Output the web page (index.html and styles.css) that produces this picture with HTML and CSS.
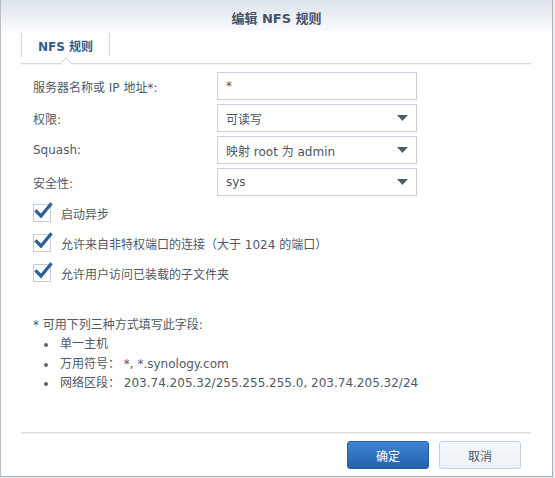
FILE: index.html
```html
<!DOCTYPE html>
<html lang="zh-CN">
<head>
<meta charset="utf-8">
<title>编辑 NFS 规则</title>
<link rel="stylesheet" href="styles.css">
</head>
<body>
<div class="dialog">
  <div class="header"><span class="title">编辑 NFS 规则</span></div>
  <div class="content">
    <div class="tabs">
      <div class="tab">NFS 规则</div>
    </div>
    <div class="form">
      <div class="row">
        <span class="label">服务器名称或 IP 地址*:</span>
        <div class="field"><span class="value">*</span></div>
      </div>
      <div class="row">
        <span class="label">权限:</span>
        <div class="field"><span class="value">可读写</span><svg class="arrow" width="11" height="6" viewBox="0 0 11 6"><path d="M0 0H11L5.5 6Z" fill="#535d68"/></svg></div>
      </div>
      <div class="row">
        <span class="label">Squash:</span>
        <div class="field"><span class="value">映射 root 为 admin</span><svg class="arrow" width="11" height="6" viewBox="0 0 11 6"><path d="M0 0H11L5.5 6Z" fill="#535d68"/></svg></div>
      </div>
      <div class="row">
        <span class="label">安全性:</span>
        <div class="field"><span class="value">sys</span><svg class="arrow" width="11" height="6" viewBox="0 0 11 6"><path d="M0 0H11L5.5 6Z" fill="#535d68"/></svg></div>
      </div>
    </div>
    <div class="checks">
      <div class="check">
        <span class="box"><svg width="20" height="18" viewBox="0 0 20 18"><path d="M3.5 9.5L8 14L17.5 2.5" fill="none" stroke="#2f5f99" stroke-width="3.2" stroke-linecap="square"/></svg></span>
        <span class="check-text">启动异步</span>
      </div>
      <div class="check">
        <span class="box"><svg width="20" height="18" viewBox="0 0 20 18"><path d="M3.5 9.5L8 14L17.5 2.5" fill="none" stroke="#2f5f99" stroke-width="3.2" stroke-linecap="square"/></svg></span>
        <span class="check-text">允许来自非特权端口的连接（大于 1024 的端口）</span>
      </div>
      <div class="check">
        <span class="box"><svg width="20" height="18" viewBox="0 0 20 18"><path d="M3.5 9.5L8 14L17.5 2.5" fill="none" stroke="#2f5f99" stroke-width="3.2" stroke-linecap="square"/></svg></span>
        <span class="check-text">允许用户访问已装载的子文件夹</span>
      </div>
    </div>
    <div class="note">
      <p class="note-title">* 可用下列三种方式填写此字段:</p>
      <ul class="note-list">
        <li>单一主机</li>
        <li>万用符号： *, *.synology.com</li>
        <li>网络区段： 203.74.205.32/255.255.255.0, 203.74.205.32/24</li>
      </ul>
    </div>
  </div>
  <div class="footer">
    <div class="footer-inner">
      <button class="btn btn-primary">确定</button>
      <button class="btn btn-cancel">取消</button>
    </div>
  </div>
</div>
</body>
</html>
```

FILE: styles.css
```css
html, body {
  margin: 0;
  padding: 0;
}
body {
  width: 555px;
  height: 478px;
  background: #e9ecef;
  font-family: "DejaVu Sans", "Noto Sans CJK SC", sans-serif;
  font-size: 12px;
  color: #4f5964;
  overflow: hidden;
}
.dialog {
  box-sizing: border-box;
  width: 553px;
  height: 477px;
  background: #fff;
  border-left: 1px solid #b9bec4;
  border-right: 1px solid #a9aeb4;
  border-bottom: 1px solid #a9aeb4;
  display: flex;
  flex-direction: column;
}
.header {
  height: 33px;
  flex: none;
  background: linear-gradient(#dce3ec, #f6f8fb 85%, #fff);
  display: flex;
  align-items: center;
  justify-content: center;
}
.title {
  font-size: 13px;
  font-weight: bold;
  color: #44546a;
  margin-top: 1px;
}
.content {
  flex: 1;
  padding: 0 21px 0 20px;
  display: flex;
  flex-direction: column;
}
.tabs {
  position: relative;
  height: 30px;
  border-bottom: 1px solid #d4d7db;
  box-shadow: 0 1px 0 #eef0f2;
  display: flex;
}
.tab {
  position: relative;
  box-sizing: border-box;
  width: 89px;
  height: 24px;
  border-left: 1px solid #d3dde8;
  border-right: 1px solid #d3dde8;
  display: flex;
  align-items: center;
  justify-content: center;
  font-weight: bold;
  color: #2f5c90;
}
.tab::after {
  content: "";
  position: absolute;
  left: 40px;
  bottom: -10px;
  width: 7px;
  height: 7px;
  background: #fff;
  border-top: 1px solid #d4d7db;
  border-left: 1px solid #d4d7db;
  transform: rotate(45deg);
}
.form {
  margin-top: 8px;
  display: flex;
  flex-direction: column;
  gap: 4px;
}
.row {
  display: flex;
  align-items: center;
  height: 28px;
}
.label {
  width: 184px;
  padding-left: 12px;
  flex: none;
}
.field {
  box-sizing: border-box;
  width: 200px;
  height: 28px;
  border: 1px solid #c8d3df;
  display: flex;
  align-items: center;
  justify-content: space-between;
  padding: 0 8px 0 8px;
  color: #4a545f;
}
.arrow {
  display: block;
}
.checks {
  margin-top: 2px;
  display: flex;
  flex-direction: column;
}
.check {
  height: 30px;
  display: flex;
  align-items: center;
  padding-left: 12px;
}
.box {
  box-sizing: border-box;
  width: 18px;
  height: 18px;
  border: 1px solid #c4cdd7;
  background: #fff;
  position: relative;
  flex: none;
}
.box svg {
  position: absolute;
  left: -1px;
  top: -3px;
  overflow: visible;
}
.check-text {
  margin-left: 10px;
}
.note {
  margin-top: 27px;
  padding-left: 12px;
}
.note-title {
  margin: 0;
  line-height: 20px;
}
.note-list {
  margin: 0;
  padding: 0;
  list-style: none;
}
.note-list li {
  position: relative;
  line-height: 19.7px;
  padding-left: 27px;
}
.note-list li::before {
  content: "";
  position: absolute;
  left: 11px;
  top: 8px;
  width: 4px;
  height: 4px;
  border-radius: 50%;
  background: #5b6570;
}
.footer {
  flex: none;
  height: 44px;
  padding: 0 21px 0 20px;
}
.footer-inner {
  height: 100%;
  box-sizing: border-box;
  border-top: 1px solid #d9dcdf;
  box-shadow: inset 0 1px 0 #eceef0;
  display: flex;
  justify-content: flex-end;
  align-items: flex-start;
  gap: 10px;
  padding: 8px 10px 0 0;
}
.btn {
  box-sizing: border-box;
  width: 82px;
  height: 28px;
  border-radius: 3px;
  font-family: "DejaVu Sans", "Noto Sans CJK SC", sans-serif;
  font-size: 12px;
  padding: 0;
  cursor: pointer;
}
.btn-primary {
  background: linear-gradient(#3e84d4, #2461ae);
  border: 1px solid #295c9f;
  color: #fff;
}
.btn-cancel {
  background: linear-gradient(#f6f9fc, #ebf1f7);
  border: 1px solid #c4d0dd;
  color: #4f5964;
}
```
